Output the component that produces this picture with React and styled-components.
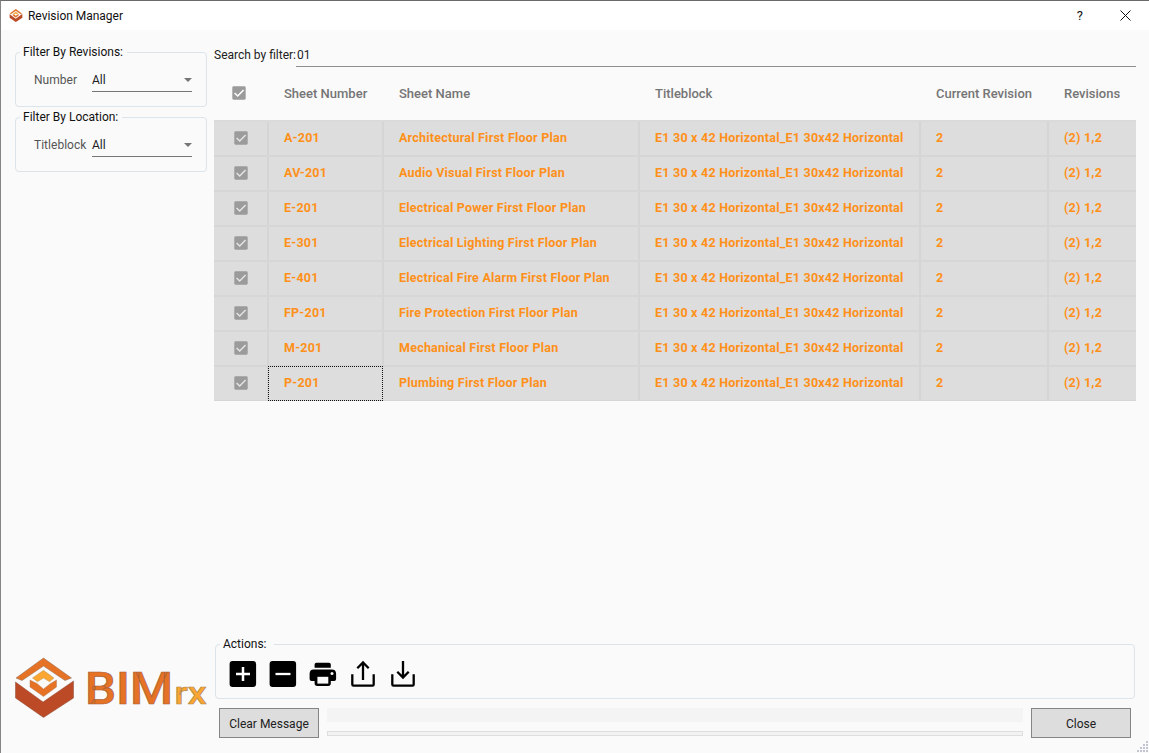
import React from 'react';
import styled, { createGlobalStyle, css } from 'styled-components';

const GlobalStyle = createGlobalStyle`
  *, *::before, *::after { box-sizing: border-box; }
  body {
    margin: 0;
    background: #fafafa;
    font-family: Roboto, "Liberation Sans", sans-serif;
    font-size: 13px;
    color: #212121;
  }
  button, input { font: inherit; color: inherit; }
`;

const Window = styled.div`
  width: 1149px;
  height: 753px;
  display: flex;
  flex-direction: column;
  overflow: hidden;
  background: #fafafa;
  border-top: 1px solid #6c696b;
  border-left: 1px solid #858585;
  position: relative;
`;

const TitleBar = styled.header`
  height: 29px;
  flex: none;
  display: flex;
  align-items: center;
  background: #fff;
  padding: 0 18px 0 8px;
`;

const WindowTitle = styled.h1`
  flex: 1;
  margin: 0 0 0 5px;
  font-size: 12px;
  font-weight: 400;
  letter-spacing: -0.02px;
  color: #111;
`;

const WindowButton = styled.button`
  width: ${(p) => p.$width}px;
  padding: 0;
  border: 0;
  background: none;
  display: flex;
  justify-content: flex-end;
  align-items: center;
  font-size: 13px;
  color: #111;
`;

const Body = styled.div`
  flex: 1;
  min-height: 0;
  display: grid;
  grid-template-columns: 192px 922px;
  column-gap: 7px;
  padding: 0 0 0 14px;
`;

const Sidebar = styled.aside`
  display: flex;
  flex-direction: column;
  padding-top: 14px;
`;

const Group = styled.fieldset`
  margin: 0 0 ${(p) => p.$gap || 0}px ${(p) => p.$indent || 0}px;
  width: ${(p) => p.$width}px;
  height: ${(p) => p.$height}px;
  padding: 0;
  border: 1px solid #dbe4ea;
  border-radius: 4px;
  min-width: 0;
`;

const Legend = styled.legend`
  margin-left: 4px;
  padding: 0 3px;
  width: ${(p) => p.$width}px;
  height: 16px;
  line-height: 16px;
  font-size: 12px;
  white-space: nowrap;
  color: #111;
`;

const Field = styled.div`
  display: flex;
  align-items: center;
  height: 25px;
  margin-top: 7px;
  padding-left: 18px;
`;

const FieldLabel = styled.label`
  width: 58px;
  padding-top: 1px;
  font-size: 12px;
  letter-spacing: 0.02px;
  white-space: nowrap;
  color: #555;
`;

const Select = styled.div`
  width: 100px;
  height: 25px;
  padding-top: 1px;
  display: flex;
  align-items: center;
  justify-content: space-between;
  border-bottom: 1px solid #767676;
  font-size: 12px;
  color: #1c1c1c;

  &::after {
    content: "";
    border: 4px solid transparent;
    border-top-color: #757575;
    border-bottom: 0;
  }
`;

const LogoWrap = styled.div`
  margin-top: auto;
  height: 96px;
`;

const Main = styled.main`
  display: flex;
  flex-direction: column;
  min-width: 0;
`;

const SearchRow = styled.div`
  display: flex;
  height: 37px;
  padding-top: 14px;
`;

const SearchLabel = styled.label`
  width: 82px;
  line-height: 23px;
  font-size: 12px;
  white-space: nowrap;
`;

const SearchInput = styled.input`
  flex: 1;
  min-width: 0;
  height: 23px;
  padding: 0 0 0 1px;
  border: 0;
  border-bottom: 1px solid #8e8e8e;
  outline: 0;
  background: transparent;
  font-size: 12px;
`;

const columns = css`
  display: grid;
  grid-template-columns: 55px 115px 256px 281px 128px 87px;
`;

const HeaderRow = styled.div`
  ${columns}
  height: 53px;
  align-items: center;
  font-weight: 500;
  color: #757575;
`;

const HeaderCell = styled.div`
  padding-left: ${(p) => (p.$check ? 18 : 15)}px;
  padding-bottom: ${(p) => (p.$check ? 1 : 0)}px;
  white-space: nowrap;
`;

const Rows = styled.div`
  border-top: 2px solid #dadada;
`;

const Row = styled.div`
  ${columns}
  height: 35px;
  background: #ddd;
  border-bottom: 2px solid #d6d6d6;
  color: #ff9019;
  font-size: 12.5px;
  font-weight: 700;
  letter-spacing: 0.225px;

  &:last-child {
    height: 34px;
    border-bottom-width: 1px;
  }
`;

const Cell = styled.div`
  display: flex;
  align-items: center;
  padding: 0 0 ${(p) => (p.$check ? 1 : 3)}px ${(p) => (p.$check ? 20 : 15)}px;
  white-space: nowrap;
  border-right: 2px solid #d5d5d5;
  &:last-child { border-right: 0; }
  ${(p) => p.$focused && css`
    margin: -1px 1px -1px -1px;
    border: 1px dotted #111;
  `}
`;

const Spacer = styled.div`
  flex: 1;
`;

const ActionList = styled.div`
  display: flex;
  align-items: center;
  gap: 4px;
  height: 36px;
  margin-top: 4px;
  padding-left: 9px;
`;

const ActionButton = styled.button`
  width: 36px;
  height: 36px;
  padding: 0;
  border: 0;
  background: none;
  display: grid;
  place-items: center;
`;

const Footer = styled.footer`
  display: flex;
  align-items: flex-start;
  gap: 8px;
  height: 45px;
  padding-left: 5px;
`;

const PushButton = styled.button`
  width: 100px;
  height: 30px;
  padding: 2px 0 0;
  border: 1px solid #858585;
  background: #ddd;
  font-size: 12px;
  color: #202020;
`;

const Status = styled.div`
  width: 696px;
  display: flex;
  flex-direction: column;
  gap: 9px;
`;

const Message = styled.div`
  height: 14px;
  background: #f4f4f4;
`;

const Progress = styled.div`
  height: 5px;
  border: 1px solid #dedede;
  background: #f2f2f2;
`;

const Grip = styled.svg`
  position: absolute;
  right: 1px;
  bottom: 0;
`;

const CheckSvg = styled.svg`
  display: block;
`;

const Check = ({ tick = '#fff' }) => (
  <CheckSvg width="14" height="14" viewBox="0 0 14 14">
    <rect x="0.3" y="0.3" width="13.4" height="13.4" rx="1.4" fill="#9b9b9b" />
    <path d="M2.6 7 L5.7 10 L11.6 4" fill="none" stroke={tick} strokeWidth="1.5" />
  </CheckSvg>
);

const Mark = () => (
  <g>
    <path d="M1 20.5 L28.5 0.5 L56.5 20.5 L50 23 L28.5 8.5 L7 23 Z" fill="#e57225" stroke="#8a6a55" strokeWidth="0.5" />
    <path d="M0.5 24.5 L28 44.5 L58.5 23.5 V40.5 L28.5 60 L0.5 40.5 Z" fill="#bd4a27" stroke="#8a4a35" strokeWidth="0.5" />
    <path d="M15 22.5 L22 26 L28.5 31.5 L35.5 26 L41.5 22.5 V29.5 L28.5 39 L15 29.5 Z" fill="#e57225" stroke="#a8714e" strokeWidth="0.4" />
    <path d="M17.5 20.5 L28.5 12.8 L39 20.5 L34.5 24.3 L28.5 20.5 L22.5 24.3 Z" fill="#fba631" stroke="#a88655" strokeWidth="0.4" />
  </g>
);

const Logo = () => (
  <svg width="192" height="64" viewBox="0 0 192 64">
    <g transform="translate(0 0.5)"><Mark /></g>
    <g fontFamily="Roboto, sans-serif" strokeWidth="0.7">
      <text x="70" y="47" fontSize="43.5" fontWeight="500" fill="#e57225" stroke="#a8613a" textLength="88" lengthAdjust="spacingAndGlyphs">BIM</text>
      <text x="159.5" y="47" fontSize="31" fontWeight="500" fill="#fba631" stroke="#b58a4c" textLength="32" lengthAdjust="spacingAndGlyphs">rx</text>
    </g>
  </svg>
);

const Icon = ({ children }) => (
  <svg width="36" height="36" viewBox="0 0 36 36">{children}</svg>
);

const actions = [
  ['Add', (
    <Icon>
      <rect x="4.6" y="5" width="26.5" height="26" rx="3" />
      <path d="M18 11v14M11 18h14" stroke="#fff" strokeWidth="2.5" />
    </Icon>
  )],
  ['Remove', (
    <Icon>
      <rect x="4.6" y="5" width="26.5" height="26" rx="3" />
      <path d="M10.5 18h15" stroke="#fff" strokeWidth="2.3" />
    </Icon>
  )],
  ['Print', (
    <Icon>
      <path d="M9.6 8.5q0-1.8 1.8-1.8h12.6q1.8 0 1.8 1.8v3.2h-16.2z" />
      <path d="M8.6 13.4h18.2q4.3 0 4.3 4.3v5.3q0 2-2 2h-3.3v2.3q0 2.6-2.600 2.600h-11q-2.600 0-2.600-2.600v-2.300h-3q-2 0-2-2v-5.300q0-4.300 4-4.300z" />
      <path d="M12.4 20.8h10.9v6.8h-10.9z" fill="#fafafa" />
      <circle cx="27" cy="17.5" r="1.5" fill="#fafafa" />
    </Icon>
  )],
  ['Export', (
    <Icon>
      <path d="M7.3 18.2v10.3q0 1.2 1.2 1.2h19q1.2 0 1.2-1.2v-10.3M18 24v-17M12.3 12.2l5.7-5.7 5.7 5.7" fill="none" stroke="#000" strokeWidth="2.3" />
    </Icon>
  )],
  ['Import', (
    <Icon>
      <path d="M7.3 18.2v10.3q0 1.2 1.2 1.2h19q1.2 0 1.2-1.2v-10.3M18 5v17M12.3 15.8l5.7 5.7 5.7-5.7" fill="none" stroke="#000" strokeWidth="2.3" />
    </Icon>
  )],
];

const sheets = [
  ['A-201', 'Architectural First Floor Plan'],
  ['AV-201', 'Audio Visual First Floor Plan'],
  ['E-201', 'Electrical Power First Floor Plan'],
  ['E-301', 'Electrical Lighting First Floor Plan'],
  ['E-401', 'Electrical Fire Alarm First Floor Plan'],
  ['FP-201', 'Fire Protection First Floor Plan'],
  ['M-201', 'Mechanical First Floor Plan'],
  ['P-201', 'Plumbing First Floor Plan'],
];

const gripDots = [[9, 0], [6, 3], [9, 3], [3, 6], [6, 6], [9, 6], [0, 9], [3, 9], [6, 9], [9, 9]];

export default function App() {
  return (
    <>
      <GlobalStyle />
      <Window>
        <TitleBar>
          <svg width="14" height="13" viewBox="0 0 59 60"><Mark /></svg>
          <WindowTitle>Revision Manager</WindowTitle>
          <WindowButton $width={30} aria-label="Help">?</WindowButton>
          <WindowButton $width={48} aria-label="Close window">
            <svg width="11" height="11" viewBox="0 0 11 11">
              <path d="M0.5 0.5l10 10M10.5 0.5l-10 10" stroke="#111" strokeWidth="1" />
            </svg>
          </WindowButton>
        </TitleBar>
        <Body>
          <Sidebar>
            <Group $width={192} $height={63} $gap={2}>
              <Legend $width={107}>Filter By Revisions:</Legend>
              <Field>
                <FieldLabel>Number</FieldLabel>
                <Select>All</Select>
              </Field>
            </Group>
            <Group $width={192} $height={63}>
              <Legend $width={102}>Filter By Location:</Legend>
              <Field>
                <FieldLabel>Titleblock</FieldLabel>
                <Select>All</Select>
              </Field>
            </Group>
            <LogoWrap><Logo /></LogoWrap>
          </Sidebar>
          <Main>
            <SearchRow>
              <SearchLabel htmlFor="search">Search by filter:</SearchLabel>
              <SearchInput id="search" defaultValue="01" />
            </SearchRow>
            <HeaderRow>
              <HeaderCell $check><Check /></HeaderCell>
              <HeaderCell>Sheet Number</HeaderCell>
              <HeaderCell>Sheet Name</HeaderCell>
              <HeaderCell>Titleblock</HeaderCell>
              <HeaderCell>Current Revision</HeaderCell>
              <HeaderCell>Revisions</HeaderCell>
            </HeaderRow>
            <Rows>
              {sheets.map(([number, name]) => (
                <Row key={number}>
                  <Cell $check><Check tick="#e4e4e4" /></Cell>
                  <Cell $focused={number === 'P-201'}>{number}</Cell>
                  <Cell>{name}</Cell>
                  <Cell>E1 30 x 42 Horizontal_E1 30x42 Horizontal</Cell>
                  <Cell>2</Cell>
                  <Cell>(2) 1,2</Cell>
                </Row>
              ))}
            </Rows>
            <Spacer />
            <Group $width={920} $height={63} $gap={9} $indent={1}>
              <Legend $width={54}>Actions:</Legend>
              <ActionList>
                {actions.map(([label, icon]) => (
                  <ActionButton key={label} aria-label={label}>{icon}</ActionButton>
                ))}
              </ActionList>
            </Group>
            <Footer>
              <PushButton>Clear Message</PushButton>
              <Status>
                <Message />
                <Progress />
              </Status>
              <PushButton>Close</PushButton>
            </Footer>
          </Main>
        </Body>
        <Grip width="11" height="12" viewBox="0 0 11 12">
          {gripDots.map(([x, y]) => (
            <rect key={`${x}-${y}`} x={x} y={y} width="2" height="2" fill="#c3c6d2" />
          ))}
        </Grip>
      </Window>
    </>
  );
}
